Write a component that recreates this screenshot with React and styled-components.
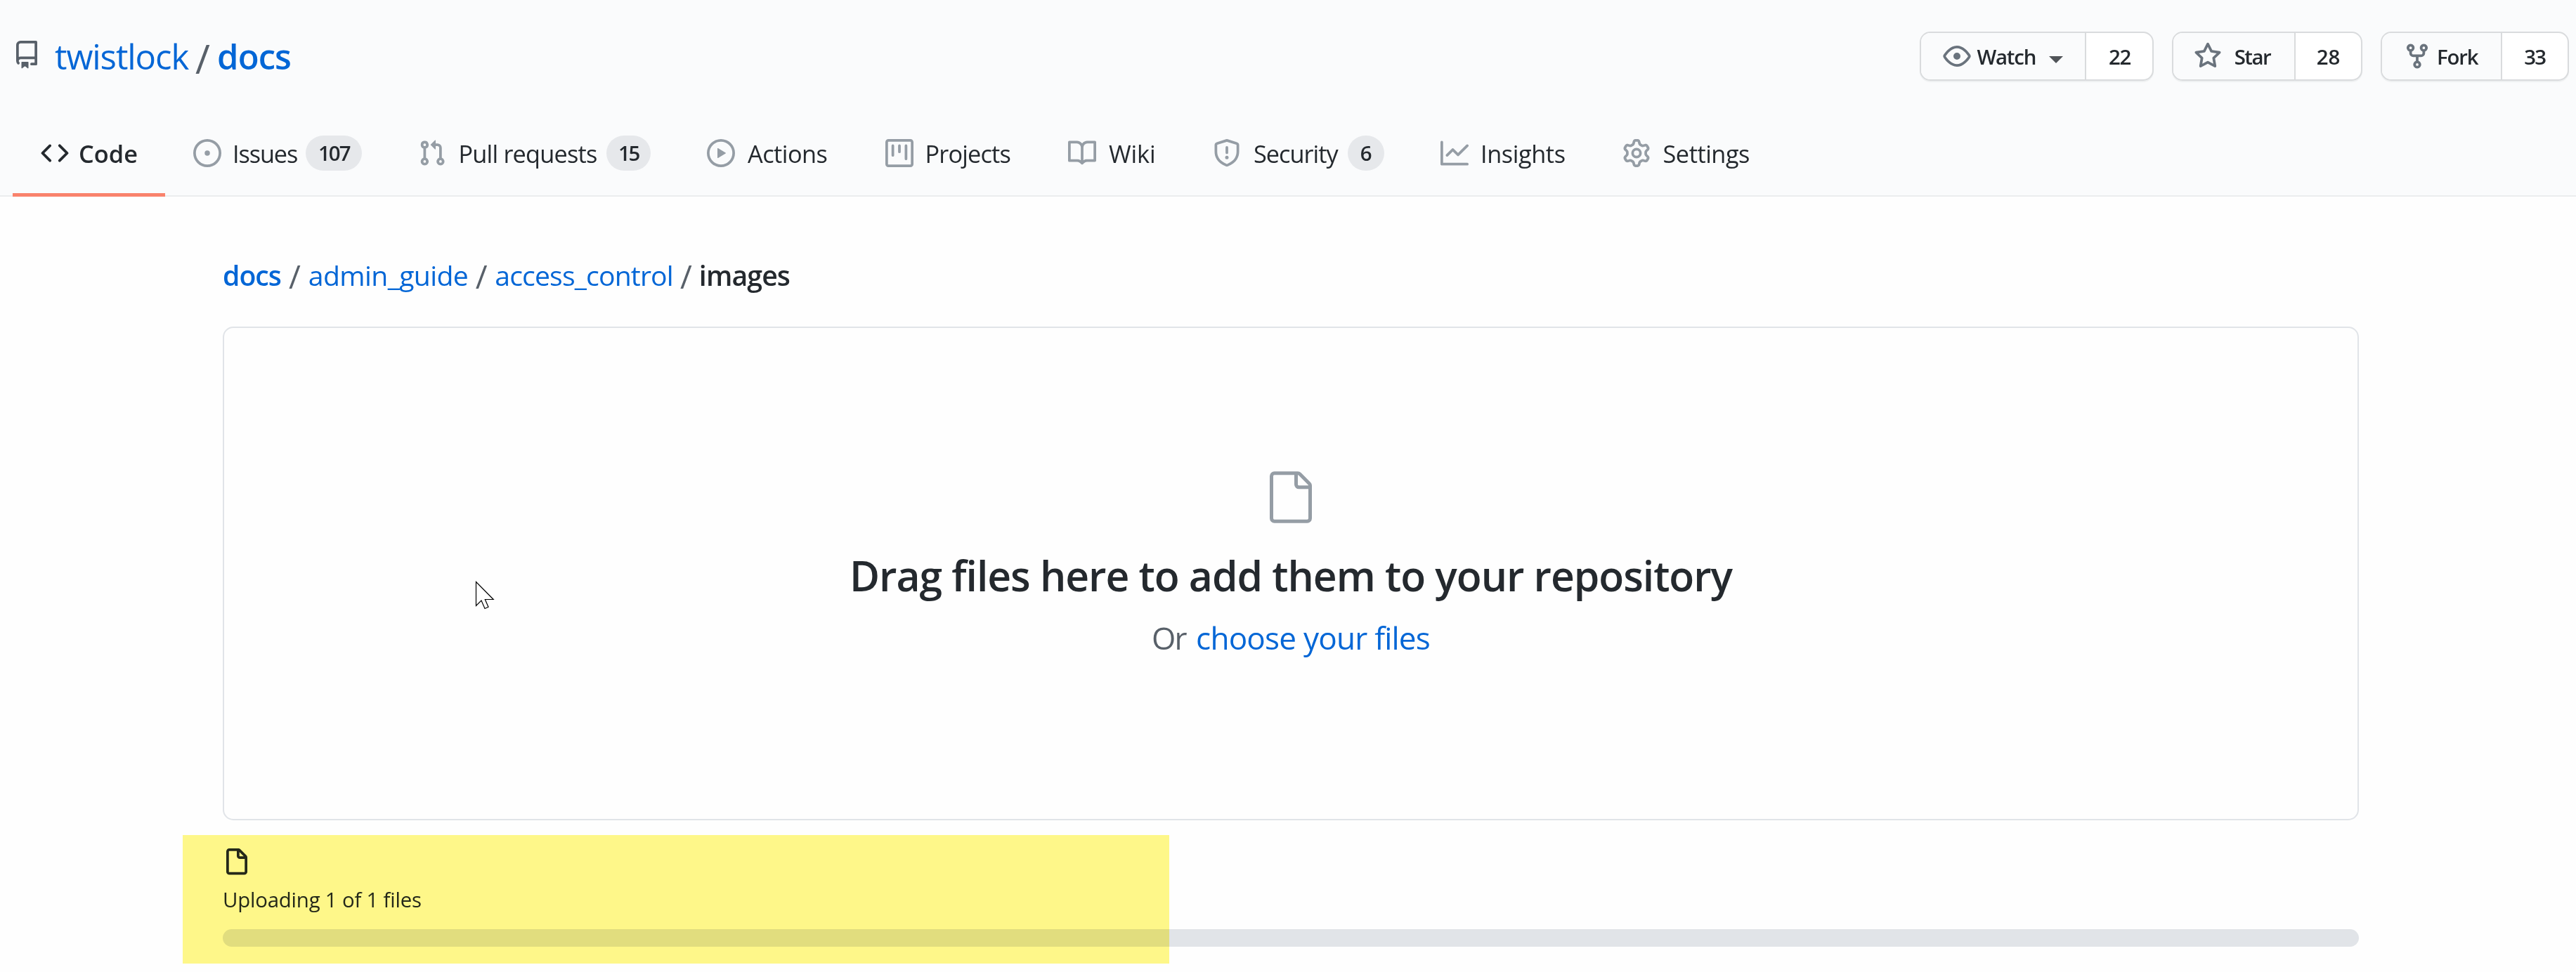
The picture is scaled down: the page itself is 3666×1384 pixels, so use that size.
import React from "react";
import styled, { createGlobalStyle } from "styled-components";

const GlobalStyle = createGlobalStyle`
  * { box-sizing: border-box; }
  body {
    margin: 0;
    background: #fefefe;
    color: #24292e;
    font-family: "Open Sans", "Noto Sans", sans-serif;
  }
  a { color: #0366d6; text-decoration: none; }
`;

const Page = styled.div`
  position: relative;
  height: 1384px;
  overflow: hidden;
`;

const Header = styled.header`
  height: 280px;
  padding-top: 45px;
  background: #fafbfc;
  border-bottom: 2px solid #ebedee;
`;

const TitleRow = styled.div`
  display: flex;
  align-items: center;
  justify-content: space-between;
  height: 70px;
  padding: 0 10px 0 18px;
`;

const RepoTitle = styled.h1`
  display: flex;
  align-items: center;
  height: 68px;
  margin: 0;
  font-size: 49px;
  line-height: 68px;
  font-weight: 400;
  color: #586069;

  svg { margin: 0 20px 4px 0; }
`;

const Label = styled.span`
  letter-spacing: ${(p) => p.$track || 0}px;
  white-space: nowrap;
`;

const TitleLink = styled.a`
  font-weight: ${(p) => (p.$bold ? 600 : 400)};
  letter-spacing: ${(p) => p.$track || 0}px;
`;

const TitleSlash = styled.span`
  display: flex;
  justify-content: center;
  width: 41px;
  padding-top: 6px;
  font-size: 57px;
`;

const Actions = styled.div`
  display: flex;
  gap: 25.3px;
`;

const ButtonGroup = styled.div`
  display: flex;
  width: ${(p) => p.$width}px;
  height: 70px;
  border: 2px solid #d9dbdd;
  border-radius: 15px;
  overflow: hidden;
  background: #fff;
  box-shadow: 0 2px 1px rgba(27, 31, 35, 0.05);
  font-size: 29.4px;
  line-height: 68px;
  font-weight: 600;
`;

const ActionButton = styled.div`
  display: flex;
  align-items: center;
  gap: ${(p) => p.$gap}px;
  width: ${(p) => p.$width}px;
  padding-left: ${(p) => p.$inset}px;
  background: #fafbfc;

  svg { color: #6a737d; }
`;

const ButtonLabel = styled(Label)`
  padding-top: 1px;
`;

const Caret = styled.i`
  width: 0;
  height: 0;
  margin: 10px 0 0 11px;
  border: 10px solid transparent;
  border-top-color: #505458;
  border-bottom: 0;
`;

const ActionCount = styled.div`
  flex: 1;
  border-left: 2px solid #d9dbdd;
  text-align: center;
  letter-spacing: ${(p) => p.$track || 0}px;
`;

const Tabs = styled.nav`
  display: flex;
  height: 124px;
  margin-top: 41px;
  padding-left: 18px;
`;

const Tab = styled.div`
  display: flex;
  align-items: center;
  width: ${(p) => p.$width}px;
  padding-left: 40px;
  font-size: 34.3px;
  line-height: 50px;
  font-weight: ${(p) => (p.$active ? 600 : 400)};
  box-shadow: ${(p) => (p.$active ? "inset 0 -5px 0 #f9826c" : "none")};

  svg {
    margin-right: ${(p) => p.$gap}px;
    color: ${(p) => (p.$active ? "#24292e" : "#959da5")};
  }
`;

const TabLabel = styled(Label)`
  padding-top: 2px;
`;

const Counter = styled.span`
  display: flex;
  justify-content: center;
  width: ${(p) => p.$width}px;
  height: 50px;
  margin-left: ${(p) => p.$offset}px;
  border-radius: 25px;
  background: #e6e8eb;
  font-size: 29.4px;
  line-height: 50px;
  font-weight: 600;
  letter-spacing: ${(p) => p.$track}px;
`;

const Content = styled.main`
  display: flex;
  flex-direction: column;
  padding: 81px 309px 0 317px;
`;

const Breadcrumb = styled.div`
  display: flex;
  height: 61px;
  font-size: 39.2px;
  line-height: 61px;
`;

const Crumb = styled.a`
  letter-spacing: ${(p) => p.$track}px;
  font-weight: ${(p) => (p.$bold ? 600 : 400)};
`;

const CurrentCrumb = styled.strong`
  font-weight: 600;
  letter-spacing: -0.87px;
`;

const CrumbSlash = styled.span`
  display: flex;
  justify-content: center;
  width: ${(p) => p.$width}px;
  padding-top: 2px;
  font-size: 46px;
  color: #586069;
`;

const DropZone = styled.section`
  display: flex;
  flex-direction: column;
  align-items: center;
  height: 703px;
  margin-top: 43px;
  padding-top: 201px;
  border: 2px solid #e1e4e8;
  border-radius: 15px;

  svg { color: #959da5; }
`;

const DropHeading = styled.h2`
  margin: 34px 0 0;
  font-size: 58.8px;
  line-height: 75px;
  font-weight: 600;
  letter-spacing: -1.03px;
`;

const DropHint = styled.p`
  display: flex;
  gap: 14px;
  margin: 18px 0 0;
  font-size: 44.1px;
  line-height: 66px;
  color: #586069;
`;

const UploadStatus = styled.section`
  display: flex;
  flex-direction: column;
  padding-top: 40px;
`;

const UploadText = styled.div`
  margin-top: 11px;
  font-size: 29.4px;
  line-height: 45px;
  letter-spacing: -0.2px;
`;

const ProgressTrack = styled.div`
  height: 25px;
  margin-top: 19px;
  border-radius: 12.5px;
  background: #e1e4e8;
`;

const Highlight = styled.div`
  position: absolute;
  left: 260px;
  top: 1189px;
  width: 1404px;
  height: 183px;
  background: #fff88a;
  mix-blend-mode: multiply;
`;

const Pointer = styled.svg`
  position: absolute;
  left: 676px;
  top: 827px;
`;

const PATHS = {
  repo: "M2 2.5A2.5 2.5 0 014.5 0h8.75a.75.75 0 01.75.75v12.5a.75.75 0 01-.75.75h-2.5a.75.75 0 110-1.5h1.75v-2h-8a1 1 0 00-.714 1.7.75.75 0 01-1.072 1.05A2.495 2.495 0 012 11.5v-9zm10.5-1V9h-8c-.356 0-.694.074-1 .208V2.5a1 1 0 011-1h8zM5 12.25v3.25a.25.25 0 00.4.2l1.45-1.087a.25.25 0 01.3 0L8.6 15.7a.25.25 0 00.4-.2v-3.25a.25.25 0 00-.25-.25h-3.5a.25.25 0 00-.25.25z",
  code: "M4.72 3.22a.75.75 0 011.06 1.06L2.06 8l3.72 3.72a.75.75 0 11-1.06 1.06L.47 8.53a.75.75 0 010-1.06l4.25-4.25zm6.56 0a.75.75 0 10-1.06 1.06L13.94 8l-3.72 3.72a.75.75 0 101.06 1.06l4.25-4.25a.75.75 0 000-1.06l-4.25-4.25z",
  issue: "M8 9.5a1.5 1.5 0 100-3 1.5 1.5 0 000 3zM8 0a8 8 0 100 16A8 8 0 008 0zM1.5 8a6.5 6.5 0 1113 0 6.5 6.5 0 01-13 0z",
  pull: "M7.177 3.073L9.573.677A.25.25 0 0110 .854v4.792a.25.25 0 01-.427.177L7.177 3.427a.25.25 0 010-.354zM3.75 2.5a.75.75 0 100 1.5.75.75 0 000-1.5zm-2.25.75a2.25 2.25 0 113 2.122v5.256a2.251 2.251 0 11-1.5 0V5.372A2.25 2.25 0 011.5 3.25zM11 2.5h-1V4h1a1 1 0 011 1v5.628a2.251 2.251 0 101.5 0V5A2.5 2.5 0 0011 2.5zm1 10.25a.75.75 0 111.5 0 .75.75 0 01-1.5 0zM3.75 12a.75.75 0 100 1.5.75.75 0 000-1.5z",
  play: "M1.5 8a6.5 6.5 0 1113 0 6.5 6.5 0 01-13 0zM8 0a8 8 0 100 16A8 8 0 008 0zM6.379 5.227A.25.25 0 006 5.442v5.117a.25.25 0 00.379.214l4.264-2.559a.25.25 0 000-.428L6.379 5.227z",
  project: "M1.75 0A1.75 1.75 0 000 1.75v12.5C0 15.216.784 16 1.75 16h12.5A1.75 1.75 0 0016 14.25V1.75A1.75 1.75 0 0014.25 0H1.75zM1.5 1.75a.25.25 0 01.25-.25h12.5a.25.25 0 01.25.25v12.5a.25.25 0 01-.25.25H1.75a.25.25 0 01-.25-.25V1.75zM11.75 3a.75.75 0 00-.75.75v7.5a.75.75 0 001.5 0v-7.5a.75.75 0 00-.75-.75zm-8.25.75a.75.75 0 011.5 0v5.5a.75.75 0 01-1.5 0v-5.5zM8 3a.75.75 0 00-.75.75v3.5a.75.75 0 001.5 0v-3.5A.75.75 0 008 3z",
  book: "M0 1.75A.75.75 0 01.75 1h4.253c1.227 0 2.317.59 3 1.501A3.744 3.744 0 0111.006 1h4.245a.75.75 0 01.75.75v10.5a.75.75 0 01-.75.75h-4.507a2.25 2.25 0 00-1.591.659l-.622.621a.75.75 0 01-1.06 0l-.622-.621A2.25 2.25 0 005.258 13H.75a.75.75 0 01-.75-.75V1.75zm8.755 3a2.25 2.25 0 012.25-2.25H14.5v9h-3.757c-.71 0-1.4.201-1.992.572l.004-7.322zm-1.504 7.324l.004-5.073-.002-2.253A2.25 2.25 0 005.003 2.5H1.5v9h3.757a3.75 3.75 0 011.994.574z",
  shield: "M7.467.133a1.75 1.75 0 011.066 0l5.25 1.68A1.75 1.75 0 0115 3.48V7c0 1.566-.32 3.182-1.303 4.682-.983 1.498-2.585 2.813-5.032 3.855a1.7 1.7 0 01-1.33 0c-2.447-1.042-4.049-2.357-5.032-3.855C1.32 10.182 1 8.566 1 7V3.48a1.75 1.75 0 011.217-1.667l5.25-1.68zm.61 1.429a.25.25 0 00-.153 0l-5.25 1.68a.25.25 0 00-.174.238V7c0 1.358.275 2.666 1.057 3.86.784 1.194 2.121 2.34 4.366 3.297a.2.2 0 00.154 0c2.245-.956 3.582-2.104 4.366-3.298C13.225 9.666 13.5 8.36 13.5 7V3.48a.25.25 0 00-.174-.237l-5.25-1.68zM9 10.5a1 1 0 11-2 0 1 1 0 012 0zm-.25-5.75a.75.75 0 10-1.5 0v3a.75.75 0 001.5 0v-3z",
  graph: "M1.5 1.75a.75.75 0 00-1.5 0v12.5c0 .414.336.75.75.75h14.5a.75.75 0 000-1.5H1.5V1.75zm14.28 2.53a.75.75 0 00-1.06-1.06L10 7.94 7.53 5.47a.75.75 0 00-1.06 0L3.22 8.72a.75.75 0 001.06 1.06L7 7.06l2.47 2.47a.75.75 0 001.06 0l5.25-5.25z",
  gear: "M7.429 1.525a6.593 6.593 0 011.142 0c.036.003.108.036.137.146l.289 1.105c.147.56.55.967.997 1.189.174.086.341.183.501.29.417.278.97.423 1.53.27l1.102-.303c.11-.03.175.016.195.046.219.31.41.641.573.989.014.031.022.11-.059.19l-.815.806c-.411.406-.562.957-.53 1.456a4.588 4.588 0 010 .582c-.032.499.119 1.05.53 1.456l.815.806c.08.08.073.159.059.19a6.494 6.494 0 01-.573.99c-.02.029-.086.074-.195.045l-1.103-.303c-.559-.153-1.112-.008-1.529.27-.16.107-.327.204-.5.29-.449.222-.851.628-.998 1.189l-.289 1.105c-.029.11-.101.143-.137.146a6.613 6.613 0 01-1.142 0c-.036-.003-.108-.037-.137-.146l-.289-1.105c-.147-.56-.55-.967-.997-1.189a4.502 4.502 0 01-.501-.29c-.417-.278-.97-.423-1.53-.27l-1.102.303c-.11.03-.175-.016-.195-.046a6.492 6.492 0 01-.573-.989c-.014-.031-.022-.11.059-.19l.815-.806c.411-.406.562-.957.53-1.456a4.587 4.587 0 010-.582c.032-.499-.119-1.05-.53-1.456l-.815-.806c-.08-.08-.073-.159-.059-.19a6.44 6.44 0 01.573-.99c.02-.029.086-.075.195-.045l1.103.303c.559.153 1.112.008 1.529-.27.16-.107.327-.204.5-.29.449-.222.851-.628.998-1.189l.289-1.105c.029-.11.101-.143.137-.146zM8 0c-.236 0-.47.01-.701.03-.743.065-1.29.615-1.458 1.261l-.29 1.106c-.017.066-.078.158-.211.224a5.994 5.994 0 00-.668.386c-.123.082-.233.09-.3.071L3.27 2.776c-.644-.177-1.392.02-1.82.63a7.977 7.977 0 00-.704 1.217c-.315.675-.111 1.422.363 1.891l.815.806c.05.048.098.147.088.294a6.084 6.084 0 000 .772c.01.147-.038.246-.088.294l-.815.806c-.474.469-.678 1.216-.363 1.891.2.428.436.835.704 1.218.428.609 1.176.806 1.82.63l1.103-.303c.066-.019.176-.011.299.071.213.143.436.272.668.386.133.066.194.158.212.224l.289 1.106c.169.646.715 1.196 1.458 1.26a8.094 8.094 0 001.402 0c.743-.064 1.29-.614 1.458-1.26l.29-1.106c.017-.066.078-.158.211-.224a5.98 5.98 0 00.668-.386c.123-.082.233-.09.3-.071l1.102.302c.644.177 1.392-.02 1.82-.63.268-.382.505-.789.704-1.217.315-.675.111-1.422-.364-1.891l-.814-.806c-.05-.048-.098-.147-.088-.294a6.1 6.1 0 000-.772c-.01-.147.039-.246.088-.294l.814-.806c.475-.469.679-1.216.364-1.891a7.992 7.992 0 00-.704-1.218c-.428-.609-1.176-.806-1.82-.63l-1.103.303c-.066.019-.176.011-.299-.071a5.991 5.991 0 00-.668-.386c-.133-.066-.194-.158-.212-.224L10.16 1.29C9.99.645 9.444.095 8.701.031A8.094 8.094 0 008 0zm1.5 8a1.5 1.5 0 11-3 0 1.5 1.5 0 013 0zM11 8a3 3 0 11-6 0 3 3 0 016 0z",
  eye: "M1.679 7.932c.412-.621 1.242-1.75 2.366-2.717C5.175 4.242 6.527 3.5 8 3.5c1.473 0 2.824.742 3.955 1.715 1.124.967 1.954 2.096 2.366 2.717a.119.119 0 010 .136c-.412.621-1.242 1.75-2.366 2.717C10.825 11.758 9.473 12.5 8 12.5c-1.473 0-2.824-.742-3.955-1.715C2.92 9.818 2.09 8.69 1.679 8.068a.119.119 0 010-.136zM8 2c-1.981 0-3.67.992-4.933 2.078C1.797 5.169.88 6.423.43 7.1a1.619 1.619 0 000 1.798c.45.678 1.367 1.932 2.637 3.024C4.329 13.008 6.019 14 8 14c1.981 0 3.67-.992 4.933-2.078 1.27-1.091 2.187-2.345 2.637-3.023a1.619 1.619 0 000-1.798c-.45-.678-1.367-1.932-2.637-3.023C11.671 2.992 9.981 2 8 2zm0 8a2 2 0 100-4 2 2 0 000 4z",
  star: "M8 .25a.75.75 0 01.673.418l1.882 3.815 4.21.612a.75.75 0 01.416 1.279l-3.046 2.97.719 4.192a.75.75 0 01-1.088.791L8 12.347l-3.766 1.98a.75.75 0 01-1.088-.79l.72-4.194L.818 6.374a.75.75 0 01.416-1.28l4.21-.611L7.327.668A.75.75 0 018 .25zm0 2.445L6.615 5.5a.75.75 0 01-.564.41l-3.097.45 2.24 2.184a.75.75 0 01.216.664l-.528 3.084 2.769-1.456a.75.75 0 01.698 0l2.77 1.456-.53-3.084a.75.75 0 01.216-.664l2.24-2.183-3.096-.45a.75.75 0 01-.564-.41L8 2.694v.001z",
  fork: "M5 3.25a.75.75 0 11-1.5 0 .75.75 0 011.5 0zm0 2.122a2.25 2.25 0 10-1.5 0v.878A2.25 2.25 0 005.75 8.5h1.5v2.128a2.251 2.251 0 101.5 0V8.5h1.5a2.25 2.25 0 002.25-2.25v-.878a2.25 2.25 0 10-1.5 0v.878a.75.75 0 01-.75.75h-4.5A.75.75 0 015 6.25v-.878zm3.75 7.378a.75.75 0 11-1.5 0 .75.75 0 011.5 0zm3-8.75a.75.75 0 100-1.5.75.75 0 000 1.5z",
  file: "M3.75 1.5a.25.25 0 00-.25.25v11.5c0 .138.112.25.25.25h8.5a.25.25 0 00.25-.25V6H9.75A1.75 1.75 0 018 4.25V1.5H3.75zm5.75.56v2.19c0 .138.112.25.25.25h2.19L9.5 2.06zM2 1.75C2 .784 2.784 0 3.75 0h5.086c.464 0 .909.184 1.237.513l3.414 3.414c.329.328.513.773.513 1.237v8.086A1.75 1.75 0 0112.25 15h-8.5A1.75 1.75 0 012 13.25V1.75z",
  fileLarge: "M5 2.5a.5.5 0 00-.5.5v18a.5.5 0 00.5.5h14a.5.5 0 00.5-.5V8.5h-4a2 2 0 01-2-2v-4H5zm10 0v4a.5.5 0 00.5.5h4a.5.5 0 00-.146-.336l-4.018-4.018A.5.5 0 0015 2.5zM3 3a2 2 0 012-2h9.982a2 2 0 011.414.586l4.018 4.018A2 2 0 0121 7.018V21a2 2 0 01-2 2H5a2 2 0 01-2-2V3z",
};

const IconSvg = styled.svg`
  display: block;
  flex: none;
  width: ${(p) => p.$size}px;
  height: ${(p) => p.$size}px;
  fill: currentColor;
`;

function Icon({ name, size = 40, grid = 16 }) {
  return (
    <IconSvg $size={size} viewBox={`0 0 ${grid} ${grid}`} aria-hidden="true">
      <path fillRule="evenodd" d={PATHS[name]} />
    </IconSvg>
  );
}

const TABS = [
  { icon: "code", label: "Code", width: 217, gap: 14, track: 0.06, active: true },
  { icon: "issue", label: "Issues", width: 320, gap: 16, track: -1.11, count: "107", pill: 80, offset: 12, countTrack: -2 },
  { icon: "pull", label: "Pull requests", width: 411, gap: 17.5, track: -0.8, count: "15", pill: 63, offset: 13.5, countTrack: -2.4 },
  { icon: "play", label: "Actions", width: 254, gap: 18, track: -0.51 },
  { icon: "project", label: "Projects", width: 260, gap: 16.5, track: -0.84 },
  { icon: "book", label: "Wiki", width: 205.5, gap: 18, track: -0.11 },
  { icon: "shield", label: "Security", width: 324.5, gap: 18.5, track: -1, count: "6", pill: 52, offset: 14.5, countTrack: 0 },
  { icon: "graph", label: "Insights", width: 258.5, gap: 17, track: -0.41 },
  { icon: "gear", label: "Settings", width: 262, gap: 18, track: -0.46 },
];

const ACTIONS = [
  { icon: "eye", label: "Watch", count: "22", width: 333, main: 233, inset: 31, gap: 8, track: -1.19, countTrack: -1.4, caret: true },
  { icon: "star", label: "Star", count: "28", width: 271.5, main: 172, inset: 29.5, gap: 17.5, track: -1.5, countTrack: -0.2 },
  { icon: "fork", label: "Fork", count: "33", width: 268.5, main: 169, inset: 30.5, gap: 8, track: -1.2, countTrack: -1.8 },
];

export default function App() {
  return (
    <Page>
      <GlobalStyle />
      <Header>
        <TitleRow>
          <RepoTitle>
            <Icon name="repo" />
            <TitleLink href="#" $track={-1.07}>twistlock</TitleLink>
            <TitleSlash>/</TitleSlash>
            <TitleLink href="#" $bold $track={-0.9}>docs</TitleLink>
          </RepoTitle>
          <Actions>
            {ACTIONS.map((a) => (
              <ButtonGroup key={a.label} $width={a.width}>
                <ActionButton $width={a.main} $gap={a.gap} $inset={a.inset}>
                  <Icon name={a.icon} />
                  <ButtonLabel $track={a.track}>{a.label}</ButtonLabel>
                  {a.caret && <Caret />}
                </ActionButton>
                <ActionCount $track={a.countTrack}>{a.count}</ActionCount>
              </ButtonGroup>
            ))}
          </Actions>
        </TitleRow>
        <Tabs>
          {TABS.map((t) => (
            <Tab key={t.label} $width={t.width} $gap={t.gap} $active={t.active}>
              <Icon name={t.icon} />
              <TabLabel $track={t.track}>{t.label}</TabLabel>
              {t.count && (
                <Counter $width={t.pill} $offset={t.offset} $track={t.countTrack}>{t.count}</Counter>
              )}
            </Tab>
          ))}
        </Tabs>
      </Header>
      <Content>
        <Breadcrumb>
          <Crumb href="#" $bold $track={-1}>docs</Crumb>
          <CrumbSlash $width={39}>/</CrumbSlash>
          <Crumb href="#" $track={-0.63}>admin_guide</Crumb>
          <CrumbSlash $width={38}>/</CrumbSlash>
          <Crumb href="#" $track={-0.86}>access_control</Crumb>
          <CrumbSlash $width={37}>/</CrumbSlash>
          <CurrentCrumb>images</CurrentCrumb>
        </Breadcrumb>
        <DropZone>
          <Icon name="fileLarge" size={80} grid={24} />
          <DropHeading>Drag files here to add them to your repository</DropHeading>
          <DropHint>
            <Label $track={-1.6}>Or</Label>
            <a href="#"><Label $track={-0.79}>choose your files</Label></a>
          </DropHint>
        </DropZone>
        <UploadStatus>
          <Icon name="file" />
          <UploadText>Uploading 1 of 1 files</UploadText>
          <ProgressTrack />
        </UploadStatus>
      </Content>
      <Highlight />
      <Pointer width="28" height="42" viewBox="0 0 28 42">
        <path d="M1.5 1.5V35.5L9 28L14 39.5L19 37.3L14.3 26.5H26.2Z" fill="#fff" stroke="#000" strokeWidth="1.2" />
      </Pointer>
    </Page>
  );
}
